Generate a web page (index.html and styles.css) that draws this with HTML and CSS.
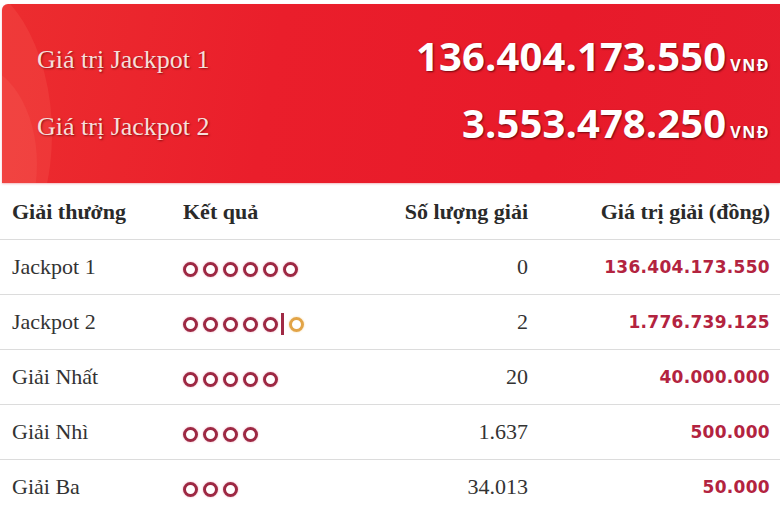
FILE: index.html
```html
<!DOCTYPE html>
<html lang="vi">
<head>
<meta charset="utf-8">
<link rel="stylesheet" href="styles.css">
</head>
<body>
<div class="banner">
  <div class="swoosh"></div>
  <div class="swoosh2"></div>
  <div class="jp-row">
    <span class="jp-label">Giá trị Jackpot 1</span>
    <span class="jp-value">136.404.173.550<span class="unit">VNĐ</span></span>
  </div>
  <div class="jp-row">
    <span class="jp-label">Giá trị Jackpot 2</span>
    <span class="jp-value">3.553.478.250<span class="unit">VNĐ</span></span>
  </div>
</div>
<table class="prizes">
  <thead>
    <tr>
      <th class="c1">Giải thưởng</th>
      <th class="c2">Kết quả</th>
      <th class="c3">Số lượng giải</th>
      <th class="c4">Giá trị giải (đồng)</th>
    </tr>
  </thead>
  <tbody>
    <tr>
      <td class="c1">Jackpot 1</td>
      <td class="c2"><span class="balls"><i class="o"></i><i class="o"></i><i class="o"></i><i class="o"></i><i class="o"></i><i class="o"></i></span></td>
      <td class="c3">0</td>
      <td class="c4">136.404.173.550</td>
    </tr>
    <tr>
      <td class="c1">Jackpot 2</td>
      <td class="c2"><span class="balls"><i class="o"></i><i class="o"></i><i class="o"></i><i class="o"></i><i class="o"></i><b class="bar"></b><i class="o gold"></i></span></td>
      <td class="c3">2</td>
      <td class="c4">1.776.739.125</td>
    </tr>
    <tr>
      <td class="c1">Giải Nhất</td>
      <td class="c2"><span class="balls"><i class="o"></i><i class="o"></i><i class="o"></i><i class="o"></i><i class="o"></i></span></td>
      <td class="c3">20</td>
      <td class="c4">40.000.000</td>
    </tr>
    <tr>
      <td class="c1">Giải Nhì</td>
      <td class="c2"><span class="balls"><i class="o"></i><i class="o"></i><i class="o"></i><i class="o"></i></span></td>
      <td class="c3">1.637</td>
      <td class="c4">500.000</td>
    </tr>
    <tr>
      <td class="c1">Giải Ba</td>
      <td class="c2"><span class="balls"><i class="o"></i><i class="o"></i><i class="o"></i></span></td>
      <td class="c3">34.013</td>
      <td class="c4">50.000</td>
    </tr>
  </tbody>
</table>
</body>
</html>
```

FILE: styles.css
```css
html, body {
  margin: 0;
  padding: 0;
  background: #ffffff;
  overflow: hidden;
}
body {
  width: 780px;
  font-family: "Liberation Serif", "Times New Roman", serif;
  color: #222;
}
.banner {
  position: relative;
  overflow: hidden;
  margin: 4px 0 0 2px;
  height: 179px;
  border-radius: 6px 0 0 0;
  background: linear-gradient(100deg, #ec2d2f 0%, #ea1e2b 35%, #e81a2a 70%, #e61d2d 100%);
  box-shadow: 0 1px 2px rgba(230, 120, 130, 0.5);
  display: flex;
  flex-direction: column;
  justify-content: center;
  gap: 12px;
  padding-bottom: 10px;
  box-sizing: border-box;
}
.swoosh {
  position: absolute;
  left: -150px;
  top: -30px;
  width: 200px;
  height: 320px;
  border-radius: 50%;
  background: rgba(255, 130, 110, 0.16);
  pointer-events: none;
}
.swoosh2 {
  position: absolute;
  left: -95px;
  top: 60px;
  width: 130px;
  height: 200px;
  border-radius: 50%;
  background: rgba(255, 140, 120, 0.12);
  pointer-events: none;
}
.jp-row {
  position: relative;
  display: flex;
  align-items: baseline;
  justify-content: space-between;
  padding: 0 10px 0 35px;
}
.jp-label {
  font-size: 26px;
  color: #f6dfda;
  text-shadow: 1px 1px 2px rgba(80, 0, 0, 0.6);
  position: relative;
  top: -3px;
}
.jp-value {
  font-family: "Open Sans", "DejaVu Sans", sans-serif;
  font-weight: 700;
  font-size: 40px;
  letter-spacing: 0.1px;
  color: #ffffff;
  text-shadow: 1px 1px 2px rgba(60, 0, 0, 0.7);
}
.unit {
  font-size: 16px;
  margin-left: 4px;
  letter-spacing: 1.5px;
}
.prizes {
  width: 780px;
  border-collapse: collapse;
  table-layout: fixed;
}
.prizes th, .prizes td {
  height: 54px;
  padding: 0 12px;
  border-bottom: 1px solid #dcdcdc;
  vertical-align: middle;
  white-space: nowrap;
}
.prizes th {
  padding-top: 2px;
  font-size: 22px;
  font-weight: 700;
  color: #2a2a2a;
  text-align: left;
}
.prizes td {
  font-size: 22px;
  color: #333;
}
.c1 { width: 147px; }
.c2 { width: 145px; }
.c3 { width: 176px; text-align: right !important; }
.c4 { width: 218px; text-align: right !important; padding-right: 10px !important; }
td.c4 {
  font-family: "DejaVu Sans", Verdana, sans-serif;
  font-weight: 700;
  font-size: 17px;
  letter-spacing: 0.3px;
  color: #b3233f;
}
.balls {
  display: flex;
  align-items: center;
  gap: 5px;
  height: 24px;
  margin-top: 4px;
}
.o {
  display: block;
  width: 9px;
  height: 9px;
  border: 3px solid #9d2843;
  border-radius: 50%;
  box-shadow: 0 0 2px rgba(235, 120, 150, 0.7);
}
.o.gold {
  border-color: #e2a447;
  box-shadow: 0 0 2px rgba(245, 200, 120, 0.8);
}
.bar {
  display: block;
  width: 3px;
  height: 22px;
  background: #a02a45;
  margin: 0 0 0 -2px;
}
```
